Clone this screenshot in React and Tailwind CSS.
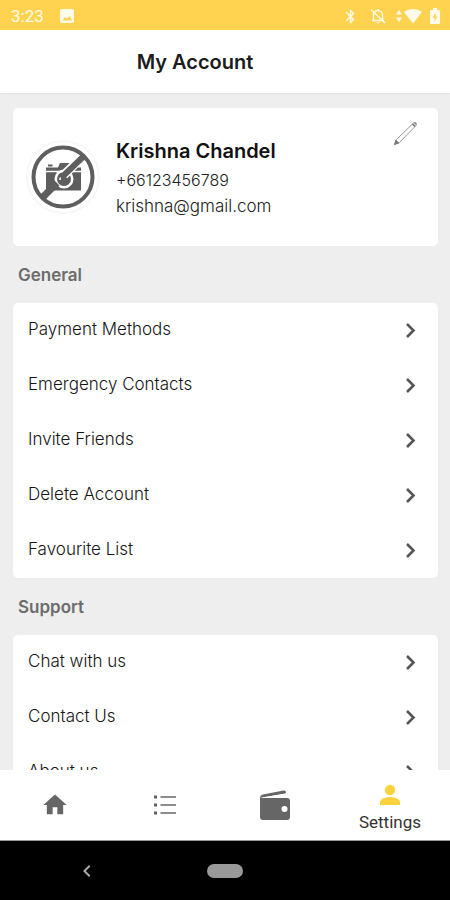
import React from "react";
import { MdBluetooth, MdHome, MdChevronLeft } from "react-icons/md";

const general = ["Payment Methods", "Emergency Contacts", "Invite Friends", "Delete Account", "Favourite List"];
const support = ["Chat with us", "Contact Us", "About us"];

function StatusBar() {
  return (
    <div className="flex h-[30px] shrink-0 items-center justify-between bg-[#ffd350] pt-0.5 pr-2.5 pl-[11px] text-[#fffbea]">
      <div className="flex items-center gap-4">
        <time className="font-['Roboto',sans-serif] text-[17px] leading-5">3:23</time>
        <svg viewBox="0 0 14 14" className="size-[14px]" aria-hidden="true">
          <rect width="14" height="14" rx="2" fill="currentColor" />
          <path d="M2.5 11.5 5 8l2 2 2.5-3 2.5 4.5z" fill="#ffd350" />
        </svg>
      </div>
      <div className="flex items-center">
        <MdBluetooth className="mr-2.5 size-[17px]" aria-hidden="true" />
        <svg viewBox="0 0 18 18" className="mr-2 size-[18px]" fill="none" stroke="currentColor" strokeWidth="1.4" aria-hidden="true">
          <path d="M4.5 13V8a4.5 4.5 0 0 1 9 0v5M3 13.500h12M9 2v2" />
          <path d="M7.500 15h3a1.500 1.500 0 0 1-3 0z" fill="currentColor" stroke="none" />
          <path d="m2 2.500 14 13.500" />
        </svg>
        <svg viewBox="0 0 8 14" className="mr-px h-3.5 w-2" fill="currentColor" aria-hidden="true">
          <path d="M4 1 7 5.500H1zM4 13 1 8.500h6z" />
        </svg>
        <svg viewBox="0 0 18 16" className="mr-2 h-4 w-[18px]" fill="currentColor" aria-hidden="true">
          <path d="M0 4C5 0 13 0 18 4L9 15.500z" />
        </svg>
        <svg viewBox="0 0 10 16" className="h-4 w-2.5" aria-hidden="true">
          <path d="M3 0h4v2h2q1 0 1 1v12q0 1-1 1H1q-1 0-1-1V3q0-1 1-1h2z" fill="currentColor" />
          <path d="M5.600 4.500 2.500 9.500h2v4l3-5h-2z" fill="#ffd350" />
        </svg>
      </div>
    </div>
  );
}

function Avatar() {
  return (
    <div className="flex size-[74px] shrink-0 items-center justify-center rounded-full border-2 border-[#f7f7f7]">
      <svg viewBox="0 0 64 64" className="size-16" role="img" aria-label="No photo">
        <path d="M15 22.500h12l2-4.500h10l2 4.500h9v23H15z" fill="#5e5e5e" />
        <path d="M17 19.500h4.500v2H17z" fill="#5e5e5e" />
        <path d="M15 26.500h35" stroke="#fff" strokeWidth="1.500" />
        <circle cx="33" cy="34" r="9.500" fill="#fff" />
        <circle cx="33" cy="34" r="7" fill="#5e5e5e" />
        <path d="M29 35a4.500 4.500 0 0 1 4.500-5" fill="none" stroke="#fff" strokeWidth="1.500" />
        <path d="M33 30 52 11" stroke="#fff" strokeWidth="9" />
        <path d="M30 33 53 11" stroke="#5e5e5e" strokeWidth="6" />
        <path d="M11 53 26 38" stroke="#5e5e5e" strokeWidth="7" />
        <circle cx="32" cy="32" r="29.500" fill="none" stroke="#5e5e5e" strokeWidth="4" />
      </svg>
    </div>
  );
}

function Section({ title, items }) {
  return (
    <section className="shrink-0">
      <h2 className="flex h-[57px] items-center pl-[5px] text-[17px] leading-6 font-semibold text-[#6c6c6c]">{title}</h2>
      <ul className="rounded-[5px] bg-white">
        {items.map((item) => (
          <li key={item}>
            <button type="button" className="flex h-[55px] w-full items-center justify-between pr-4 pb-1 pl-[15px] text-left text-[17px] leading-6 font-light text-[#151515]">
              {item}
              <svg viewBox="0 0 24 24" className="size-6 text-[#555]" fill="none" stroke="currentColor" strokeWidth="2.6" aria-hidden="true">
                <path d="m9 7 6.500 6.500L9 20" />
              </svg>
            </button>
          </li>
        ))}
      </ul>
    </section>
  );
}

function BottomNav() {
  return (
    <nav className="grid h-[71px] shrink-0 grid-cols-[11fr_11fr_11fr_12fr] border-b border-[#999] bg-white text-[#666]">
      <button type="button" aria-label="Home" className="flex items-center justify-center">
        <MdHome className="size-7" />
      </button>
      <button type="button" aria-label="Bookings" className="flex items-center justify-center">
        <svg viewBox="0 0 24 22" className="h-[22px] w-6" aria-hidden="true">
          <path d="M7.500 3H23M7.500 11H23M7.500 19H23" stroke="#8c8c8c" strokeWidth="2" />
          <path d="M1 1.500h3v3H1zM1 9.500h3v3H1zM1 17.500h3v3H1z" fill="#5f5f5f" />
        </svg>
      </button>
      <button type="button" aria-label="Wallet" className="flex items-center justify-center">
        <svg viewBox="0 0 32 32" className="size-8" aria-hidden="true">
          <path d="M1 9q0-3 3-3.500L24.500 1.500q2.500-.3 2.500 1.700 0 1-1 1.200L5 8.300h-1zM1 9h27q3 0 3 3v16q0 3-3 3H4q-3 0-3-3z" fill="currentColor" />
          <path d="M4 8.300 26.500 4.800V6.500L28 9H4z" fill="#fff" />
          <circle cx="25.500" cy="20" r="3" fill="#fff" />
        </svg>
      </button>
      <button type="button" aria-current="page" className="flex flex-col items-center justify-center gap-1 pt-2">
        <svg viewBox="0 0 22 22" className="size-[22px]" fill="#fdd23f" aria-hidden="true">
          <circle cx="11" cy="6" r="5.200" />
          <path d="M1 21v-2.500C1 14.500 7 13 11 13s10 1.500 10 5.500V21z" />
        </svg>
        <span className="font-['Roboto',sans-serif] text-[17px] leading-6 text-[#333]">Settings</span>
      </button>
    </nav>
  );
}

export default function App() {
  return (
    <div className="flex h-screen flex-col overflow-hidden bg-[#eee] font-['Inter',sans-serif]">
      <StatusBar />
      <header className="flex h-[63px] shrink-0 items-center justify-center bg-white pr-[60px] shadow-xs">
        <h1 className="text-[20px] leading-6 font-semibold text-[#1c1c1c]">My Account</h1>
      </header>
      <main className="flex min-h-0 flex-1 flex-col overflow-hidden pt-[15px] pr-3 pl-[13px]">
        <section className="flex h-[138px] shrink-0 items-center gap-4 rounded-[5px] bg-white px-[13px]">
          <Avatar />
          <div className="min-w-0 flex-1">
            <h2 className="text-[20px] leading-8 font-semibold text-[#111]">Krishna Chandel</h2>
            <p className="text-[16px] leading-[26px] font-light text-[#222]">+66123456789</p>
            <p className="text-[17px] leading-[26px] font-light text-[#222]">krishna@gmail.com</p>
          </div>
          <button type="button" aria-label="Edit profile" className="mt-3 mr-1.5 self-start">
            <svg viewBox="0 0 26 26" className="size-[26px]" fill="none" stroke="#999" strokeWidth="1" aria-hidden="true">
              <path d="m2 24 1.500-4.500L20.500 3q1.500-1 2.500 0t0 2.500L6.500 22.500z" />
              <path d="M19.500 4 22 6.500M22 3l.5 1.500M2 24l1-3 2 2z" stroke="#777" strokeWidth="1.500" />
            </svg>
          </button>
        </section>
        <Section title="General" items={general} />
        <Section title="Support" items={support} />
      </main>
      <BottomNav />
      <div className="grid h-[59px] shrink-0 grid-cols-[repeat(13,minmax(0,1fr))] items-center bg-black text-[#aaa]">
        <button type="button" aria-label="Back" className="col-span-5 flex justify-center">
          <MdChevronLeft className="size-6" />
        </button>
        <button type="button" aria-label="Home screen" className="col-span-3 flex justify-center">
          <span className="h-3.5 w-9 rounded-full bg-[#999]" />
        </button>
      </div>
    </div>
  );
}
